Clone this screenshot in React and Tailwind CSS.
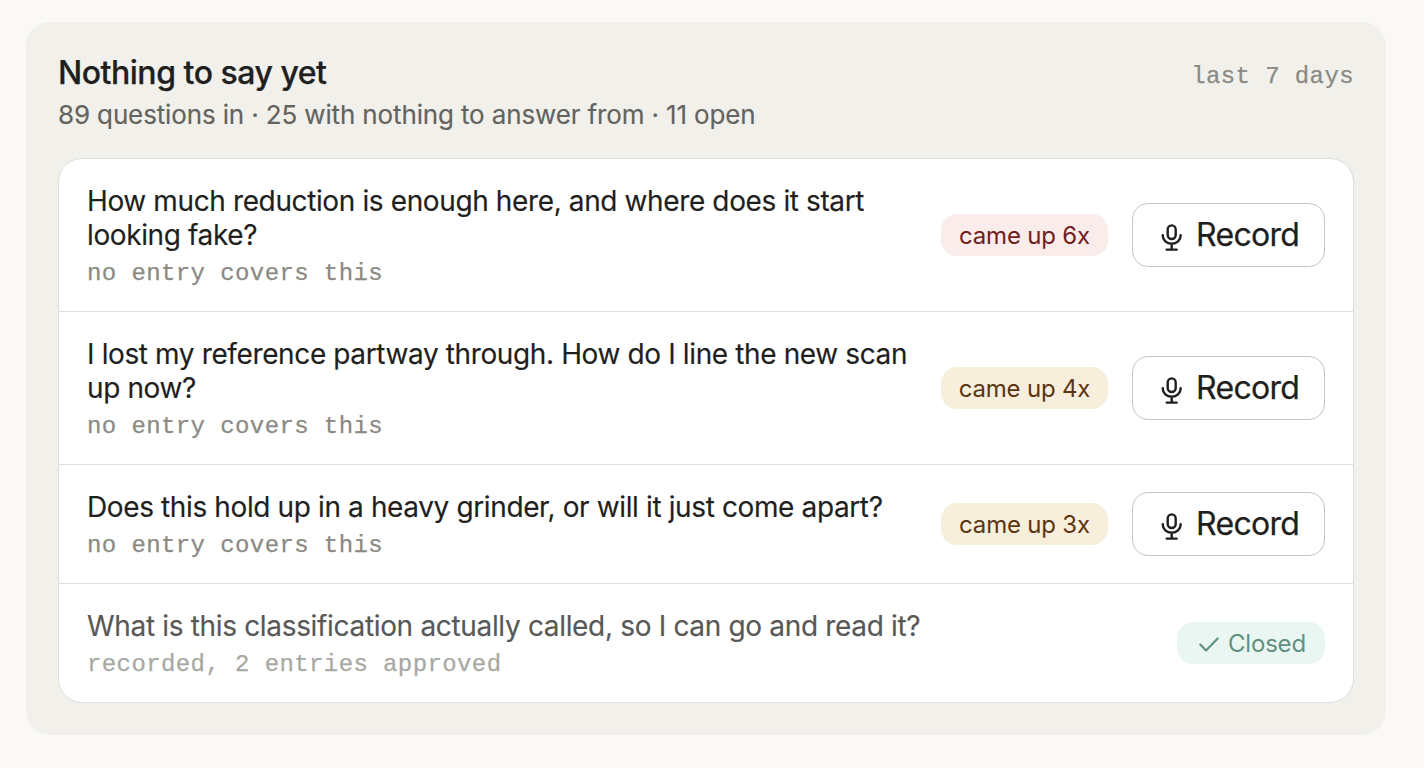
import clsx from 'clsx';

const QUESTIONS = [
  {
    id: 1,
    text: 'How much reduction is enough here, and where does it start looking fake?',
    note: 'no entry covers this',
    count: 6
  },
  {
    id: 2,
    text: 'I lost my reference partway through. How do I line the new scan up now?',
    note: 'no entry covers this',
    count: 4
  },
  {
    id: 3,
    text: 'Does this hold up in a heavy grinder, or will it just come apart?',
    note: 'no entry covers this',
    count: 3
  },
  {
    id: 4,
    text: 'What is this classification actually called, so I can go and read it?',
    note: 'recorded, 2 entries approved',
    closed: true
  }
];

function IconMic({ className }) {
  return (
    <svg
      viewBox="0 0 22 28"
      fill="none"
      stroke="currentColor"
      strokeWidth="2.4"
      strokeLinecap="round"
      className={className}
      aria-hidden="true"
    >
      <rect x="6.7" y="2.4" width="8" height="13.6" rx="4" />
      <path d="M1.8 12.1v.6c0 4.6 3.8 8 8.9 8s8.9-3.4 8.9-8v-.6M10.7 20.7v5.8M5.7 26.6h10" />
    </svg>
  );
}

function IconCheck({ className }) {
  return (
    <svg
      viewBox="0 0 20 15"
      fill="none"
      stroke="currentColor"
      strokeWidth="2.2"
      strokeLinecap="round"
      strokeLinejoin="round"
      className={className}
      aria-hidden="true"
    >
      <path d="M1.3 7.6 7 13.4 18.7 1.6" />
    </svg>
  );
}

function CountBadge({ count }) {
  return (
    <span
      className={clsx(
        'flex h-[42px] w-[167px] shrink-0 items-center justify-center whitespace-nowrap rounded-2xl pt-px text-[24px] tracking-[-0.2px]',
        count > 5 ? 'bg-[#faeceb] text-[#6f2020]' : 'bg-[#f8eedc] text-[#5c3612]'
      )}
    >
      came up {count}x
    </span>
  );
}

function RecordButton() {
  return (
    <button
      type="button"
      className="ml-6 flex h-16 w-[193px] shrink-0 items-center rounded-2xl border border-[#c6c6c5] bg-white pl-[28px] text-[32px] tracking-[-0.7px] text-[#1f1f1e] [-webkit-text-stroke:0.25px]"
    >
      <IconMic className="mr-[13px] mt-[4px] h-[28px] w-[22px]" />
      Record
    </button>
  );
}

function ClosedBadge() {
  return (
    <span className="flex h-[42px] w-[148px] shrink-0 items-center rounded-2xl bg-[#eaf6f2] pl-[22px] pt-px text-[24px] tracking-[-0.2px] text-[#639180]">
      <IconCheck className="mr-[9px] mt-[2px] h-[15px] w-5" />
      Closed
    </span>
  );
}

function QuestionRow({ question }) {
  const { text, note, count, closed } = question;
  return (
    <li className="flex items-center px-7 py-[23px]">
      <div className="min-w-0 flex-1 pr-4 pt-[2px]">
        <p
          className={clsx(
            'text-[28px] leading-[34px] [-webkit-text-stroke:0.15px]',
            closed
              ? 'tracking-[-0.33px] text-[#585857]'
              : 'tracking-[-0.38px] text-[#1f1f1e]'
          )}
        >
          {text}
        </p>
        <p
          className={clsx(
            'mt-2 font-[Liberation_Mono,monospace] text-[24px] leading-[28px] tracking-[0.4px] [-webkit-text-stroke:0.25px]',
            closed ? 'text-[#a8a8a2]' : 'text-[#8a8a83]'
          )}
        >
          {note}
        </p>
      </div>
      {closed ? (
        <ClosedBadge />
      ) : (
        <>
          <CountBadge count={count} />
          <RecordButton />
        </>
      )}
    </li>
  );
}

function App() {
  return (
    <main className="h-screen overflow-hidden bg-[#faf9f7] pl-[26px] pr-[38px] pt-[22px] font-[Inter,sans-serif]">
      <section className="h-[713px] rounded-3xl bg-[#f1f0eb] px-8 pt-8">
        <header className="flex h-[104px] items-start justify-between">
          <div>
            <h1 className="text-[32px] font-medium leading-[38px] tracking-[-0.48px] text-[#1f1f1e] [-webkit-text-stroke:0.25px]">
              Nothing to say yet
            </h1>
            <p className="mt-[7px] text-[26px] leading-[32px] tracking-[-0.14px] text-[#636360] [-webkit-text-stroke:0.15px]">
              89 questions in · 25 with nothing to answer from · 11 open
            </p>
          </div>
          <span className="mt-[7px] font-[Liberation_Mono,monospace] text-[24px] leading-[32px] tracking-[0.4px] text-[#8a8a83] [-webkit-text-stroke:0.25px]">
            last 7 days
          </span>
        </header>
        <ul className="divide-y divide-[#dededc] rounded-3xl border border-[#dededc] bg-white">
          {QUESTIONS.map((question) => (
            <QuestionRow key={question.id} question={question} />
          ))}
        </ul>
      </section>
    </main>
  );
}

export default App;
